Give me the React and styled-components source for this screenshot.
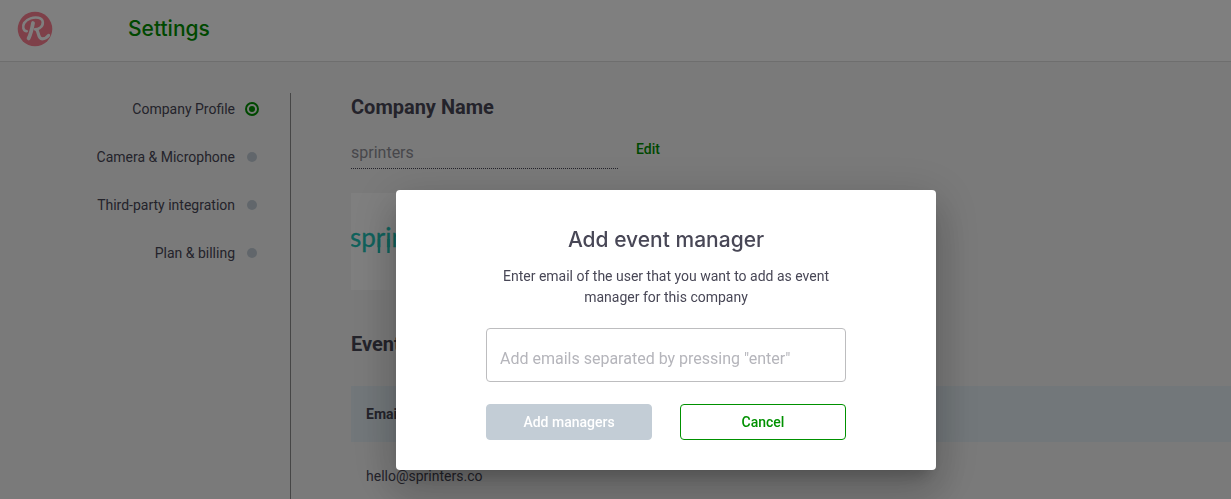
import React, { useState } from "react";
import styled, { createGlobalStyle } from "styled-components";

const GlobalStyle = createGlobalStyle`
  * {
    box-sizing: border-box;
  }
  body {
    margin: 0;
    overflow: hidden;
    background: #f5f5f5;
    color: #484756;
    font-family: Roboto, "Liberation Sans", sans-serif;
    font-size: 14px;
    line-height: 20px;
  }
  button, input {
    font-family: inherit;
  }
`;

const navItems = ["Company Profile", "Camera & Microphone", "Third-party integration", "Plan & billing"];
const managers = ["hello@sprinters.co"];

function BrandLogo() {
  return (
    <svg width="36" height="36" viewBox="0 0 36 36" role="img" aria-label="Home">
      <circle cx="18" cy="18" r="17.3" fill="#fd8192" />
      <g fill="none" stroke="#fff" strokeLinecap="round" strokeLinejoin="round">
        <path
          d="M9.8 20.2C6.2 19.8 5.2 15.6 7.2 12C10 7.4 16.6 6 21.4 6.8C27.2 8 26.8 14.2 23 16.8C21.4 17.8 19.6 18.2 18 18.2"
          strokeWidth="2.6"
        />
        <path d="M16 12C15.2 16.8 13.8 22.8 11.6 27.4" strokeWidth="3.8" />
        <path d="M19.4 18.6C22 20.2 20.6 27.6 25.2 27.8C28 27.8 30.2 26.4 31.6 24.4" strokeWidth="3.2" />
      </g>
    </svg>
  );
}

function CompanyLogo() {
  return (
    <svg width="160" height="97" viewBox="0 0 160 97" role="img" aria-label="sprinters">
      <text x="-1" y="54" fontFamily="Lato, sans-serif" fontSize="26" fill="#20c4b8" stroke="#20c4b8" strokeWidth="0.3">
        sprinters
      </text>
      <path d="M28 46V60M37.5 46V60" stroke="#20c4b8" strokeWidth="2.4" />
    </svg>
  );
}

export default function App() {
  const [active, setActive] = useState(navItems[0]);
  const [open, setOpen] = useState(true);
  const [emails, setEmails] = useState("");

  return (
    <>
      <GlobalStyle />
      <Header>
        <BrandLogo />
        <PageTitle>Settings</PageTitle>
      </Header>
      <Main>
        <Sidebar>
          {navItems.map(item => (
            <NavLink key={item} href="#" onClick={() => setActive(item)}>
              {item}
              <Marker $active={item === active} />
            </NavLink>
          ))}
        </Sidebar>
        <Content>
          <SectionTitle>Company Name</SectionTitle>
          <NameRow>
            <NameInput aria-label="Company name" defaultValue="sprinters" disabled />
            <EditButton type="button">Edit</EditButton>
          </NameRow>
          <LogoTile>
            <CompanyLogo />
          </LogoTile>
          <SectionTitle>Event managers</SectionTitle>
          <Table>
            <thead>
              <tr>
                <HeadCell>Email</HeadCell>
              </tr>
            </thead>
            <tbody>
              {managers.map(email => (
                <tr key={email}>
                  <Cell>{email}</Cell>
                </tr>
              ))}
            </tbody>
          </Table>
        </Content>
      </Main>

      {open && (
        <Overlay>
          <Dialog role="dialog" aria-modal="true" aria-labelledby="dialog-title">
            <DialogTitle id="dialog-title">Add event manager</DialogTitle>
            <DialogText>
              Enter email of the user that you want to add as event manager for this company
            </DialogText>
            <EmailInput
              aria-label="Emails"
              placeholder={'Add emails separated by pressing "enter"'}
              value={emails}
              onChange={e => setEmails(e.target.value)}
            />
            <Actions>
              <ActionButton type="button" disabled={!emails}>Add managers</ActionButton>
              <ActionButton type="button" $outlined onClick={() => setOpen(false)}>Cancel</ActionButton>
            </Actions>
          </Dialog>
        </Overlay>
      )}
    </>
  );
}

const Header = styled.header`
  display: flex;
  align-items: center;
  gap: 75px;
  height: 62px;
  padding: 0 17px 4px;
  background: #fff;
  border-bottom: 1px solid #dcdcdc;
`;

const PageTitle = styled.h1`
  margin: 0;
  color: #009100;
  font-family: Inter, sans-serif;
  font-size: 21px;
  font-weight: 500;
  line-height: 28px;
`;

const Main = styled.main`
  display: flex;
  padding-top: 31px;
`;

const Sidebar = styled.nav`
  display: flex;
  flex: 0 0 291px;
  flex-direction: column;
  align-items: flex-end;
  gap: 28px;
  padding: 6px 31px 0 0;
  border-right: 1px solid #8c8c8c;
`;

const NavLink = styled.a`
  display: flex;
  align-items: center;
  gap: 10px;
  color: inherit;
  text-decoration: none;
`;

const Marker = styled.span`
  width: ${p => (p.$active ? 14 : 10)}px;
  height: ${p => (p.$active ? 14 : 10)}px;
  margin: ${p => (p.$active ? 0 : 2)}px;
  border: ${p => (p.$active ? "2px solid #009100" : "none")};
  border-radius: 50%;
  background: ${p => (p.$active ? "#009100" : "#c3cdd6")};
  background-clip: content-box;
  padding: ${p => (p.$active ? 2 : 0)}px;
`;

const Content = styled.section`
  flex: 1;
  padding-left: 60px;
`;

const SectionTitle = styled.h2`
  margin: 0;
  font-size: 20px;
  font-weight: 700;
  line-height: 28px;
`;

const NameRow = styled.div`
  display: flex;
  align-items: flex-start;
  gap: 18px;
  margin: 16px 0 24px;
`;

const NameInput = styled.input`
  width: 267px;
  height: 32px;
  padding: 0;
  border: 0;
  border-bottom: 1px dotted #484756;
  background: transparent;
  color: #8f8f97;
  font-size: 16px;
`;

const EditButton = styled.button`
  padding: 2px 0;
  border: 0;
  background: none;
  color: #009100;
  font-size: 14px;
  font-weight: 500;
  line-height: 20px;
`;

const LogoTile = styled.div`
  display: flex;
  width: 160px;
  margin-bottom: 40px;
  background: #fff;
`;

const Table = styled.table`
  width: 100%;
  margin-top: 28px;
  border-collapse: collapse;
  text-align: left;
`;

const HeadCell = styled.th`
  height: 56px;
  padding: 0 15px;
  background: #e5eff5;
  font-weight: 700;
`;

const Cell = styled.td`
  height: 68px;
  padding: 0 15px;
`;

const Overlay = styled.div`
  position: fixed;
  inset: 0;
  display: flex;
  align-items: flex-start;
  justify-content: center;
  padding: 190px 0 0 101px;
  background: rgba(0, 0, 0, 0.5);
`;

const Dialog = styled.div`
  width: 540px;
  padding: 36px 90px 30px;
  border-radius: 4px;
  background: #fff;
  box-shadow:
    0 11px 15px -7px rgba(0, 0, 0, 0.2),
    0 24px 38px 3px rgba(0, 0, 0, 0.14),
    0 9px 46px 8px rgba(0, 0, 0, 0.12);
  text-align: center;
`;

const DialogTitle = styled.h2`
  margin: 0 0 12px;
  font-family: Inter, sans-serif;
  font-size: 21px;
  font-weight: 500;
  line-height: 28px;
`;

const DialogText = styled.p`
  margin: 0 0 20px;
  line-height: 21px;
`;

const EmailInput = styled.input`
  width: 100%;
  height: 54px;
  padding: 6px 13px 0;
  border: 1px solid #bdbdbf;
  border-radius: 4px;
  color: #484756;
  font-size: 16px;
  &::placeholder {
    color: #b5b5bb;
  }
`;

const Actions = styled.div`
  display: grid;
  grid-template-columns: 1fr 1fr;
  gap: 28px;
  margin-top: 22px;
`;

const ActionButton = styled.button`
  height: 36px;
  border: 1px solid ${p => (p.$outlined ? "#009100" : "#c3cdd6")};
  border-radius: 4px;
  background: ${p => (p.$outlined ? "#fff" : "#c3cdd6")};
  color: ${p => (p.$outlined ? "#009100" : "#fff")};
  font-size: 14px;
  font-weight: 500;
`;
